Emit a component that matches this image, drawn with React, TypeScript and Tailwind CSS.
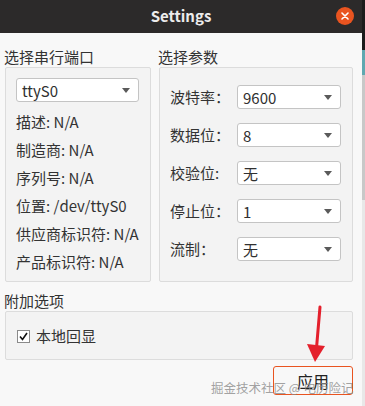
const font = { fontFamily: '"Noto Sans CJK SC", "Noto Sans", sans-serif' }

function Combo({ value, width }: { value: string; width: string }) {
  return (
    <div
      className={`flex h-[24px] ${width} items-center justify-between rounded-[3px] border border-[#c4c4c4] bg-white pl-[5px] pr-[8px] text-[15px] text-[#303030]`}
    >
      <span className="leading-none">{value}</span>
      <svg width="8" height="5" viewBox="0 0 8 5">
        <path d="M0 0 L8 0 L4 5 Z" fill="#5a5a5a" />
      </svg>
    </div>
  )
}

const info = ["描述: N/A", "制造商: N/A", "序列号: N/A", "位置: /dev/ttyS0", "供应商标识符: N/A", "产品标识符: N/A"]

const params = [
  ["波特率：", "9600"],
  ["数据位：", "8"],
  ["校验位:", "无"],
  ["停止位：", "1"],
  ["流制：", "无"],
]

export default function App() {
  return (
    <div className="relative flex h-[406px] w-[365px] overflow-hidden" style={font}>
      <div className="flex w-[362px] flex-col bg-[#f8f8f8]">
        <div className="relative flex h-[33px] items-center justify-center bg-[#2c2a2a]">
          <span className="text-[15px] font-bold text-[#ececec]">Settings</span>
          <div className="absolute right-[8px] top-[7px] flex h-[18px] w-[18px] items-center justify-center rounded-full bg-[#e95420]">
            <svg width="8" height="8" viewBox="0 0 8 8">
              <path d="M1 1 L7 7 M7 1 L1 7" stroke="white" strokeWidth="1.6" strokeLinecap="round" />
            </svg>
          </div>
        </div>

        <div className="flex flex-col px-[5px] pt-[14px] text-[15px] text-[#333]">
          <div className="flex gap-[8px]">
            <div className="flex w-[146px] flex-col">
              <div className="-ml-[1px] h-[20px] leading-[20px]">选择串行端口</div>
              <div className="flex h-[215px] flex-col rounded-[2px] border border-[#dcdcdc] bg-[#f3f3f3] pl-[10px] pt-[10px]">
                <Combo value="ttyS0" width="w-[123px]" />
                <div className="mt-[6px] flex flex-col">
                  {info.map((t) => (
                    <div key={t} className="flex h-[28px] items-center whitespace-nowrap">
                      {t}
                    </div>
                  ))}
                </div>
              </div>
            </div>
            <div className="flex w-[194px] flex-col">
              <div className="-ml-[1px] h-[20px] leading-[20px]">选择参数</div>
              <div className="flex h-[215px] flex-col gap-[14px] rounded-[2px] border border-[#dcdcdc] bg-[#f3f3f3] pl-[10px] pt-[17px]">
                {params.map(([l, v]) => (
                  <div key={l} className="flex items-center">
                    <span className="w-[67px]">{l}</span>
                    <Combo value={v} width="w-[104px]" />
                  </div>
                ))}
              </div>
            </div>
          </div>

          <div className="-ml-[1px] mt-[9px] h-[20px] leading-[20px]">附加选项</div>
          <div className="flex h-[49px] w-[348px] items-center gap-[6px] rounded-[2px] border border-[#dcdcdc] bg-[#f3f3f3] pl-[11px] pt-[2px]">
            <span className="flex h-[13px] w-[13px] items-center justify-center border border-[#8a8a8a] bg-white">
              <svg width="9" height="9" viewBox="0 0 9 9">
                <path d="M1 4.5 L3.5 7.5 L8 1" stroke="#111" strokeWidth="1.6" fill="none" />
              </svg>
            </span>
            <span>本地回显</span>
          </div>

          <div className="mt-[6px] flex justify-end pr-[4px]">
            <div className="flex h-[29px] w-[80px] items-center justify-center rounded-[3px] border border-[#e95420] bg-[#f8f8f8] text-[16px] text-[#222]">
              应用
            </div>
          </div>
        </div>
      </div>

      <div className="flex w-[3px] flex-col">
        <div className="h-[50px] bg-[#1c1c1c]" />
        <div className="h-[25px] bg-[#5fa8b0]" />
        <div className="h-[125px] bg-[#c8c8c8]" />
        <div className="flex-1 bg-[#e8e8e8]" />
      </div>

      <div className="pointer-events-none absolute left-[211px] top-[379px] text-[12.5px] text-[#8a8a8a]/80">
        掘金技术社区 @ 电历险记
      </div>

      <svg className="pointer-events-none absolute left-0 top-0" width="365" height="406">
        <path d="M320 307 L316.5 348" stroke="#e4202c" strokeWidth="3" strokeLinecap="round" />
        <path d="M307 344 L325 346 L315 362 Z" fill="#e4202c" />
      </svg>
    </div>
  )
}
